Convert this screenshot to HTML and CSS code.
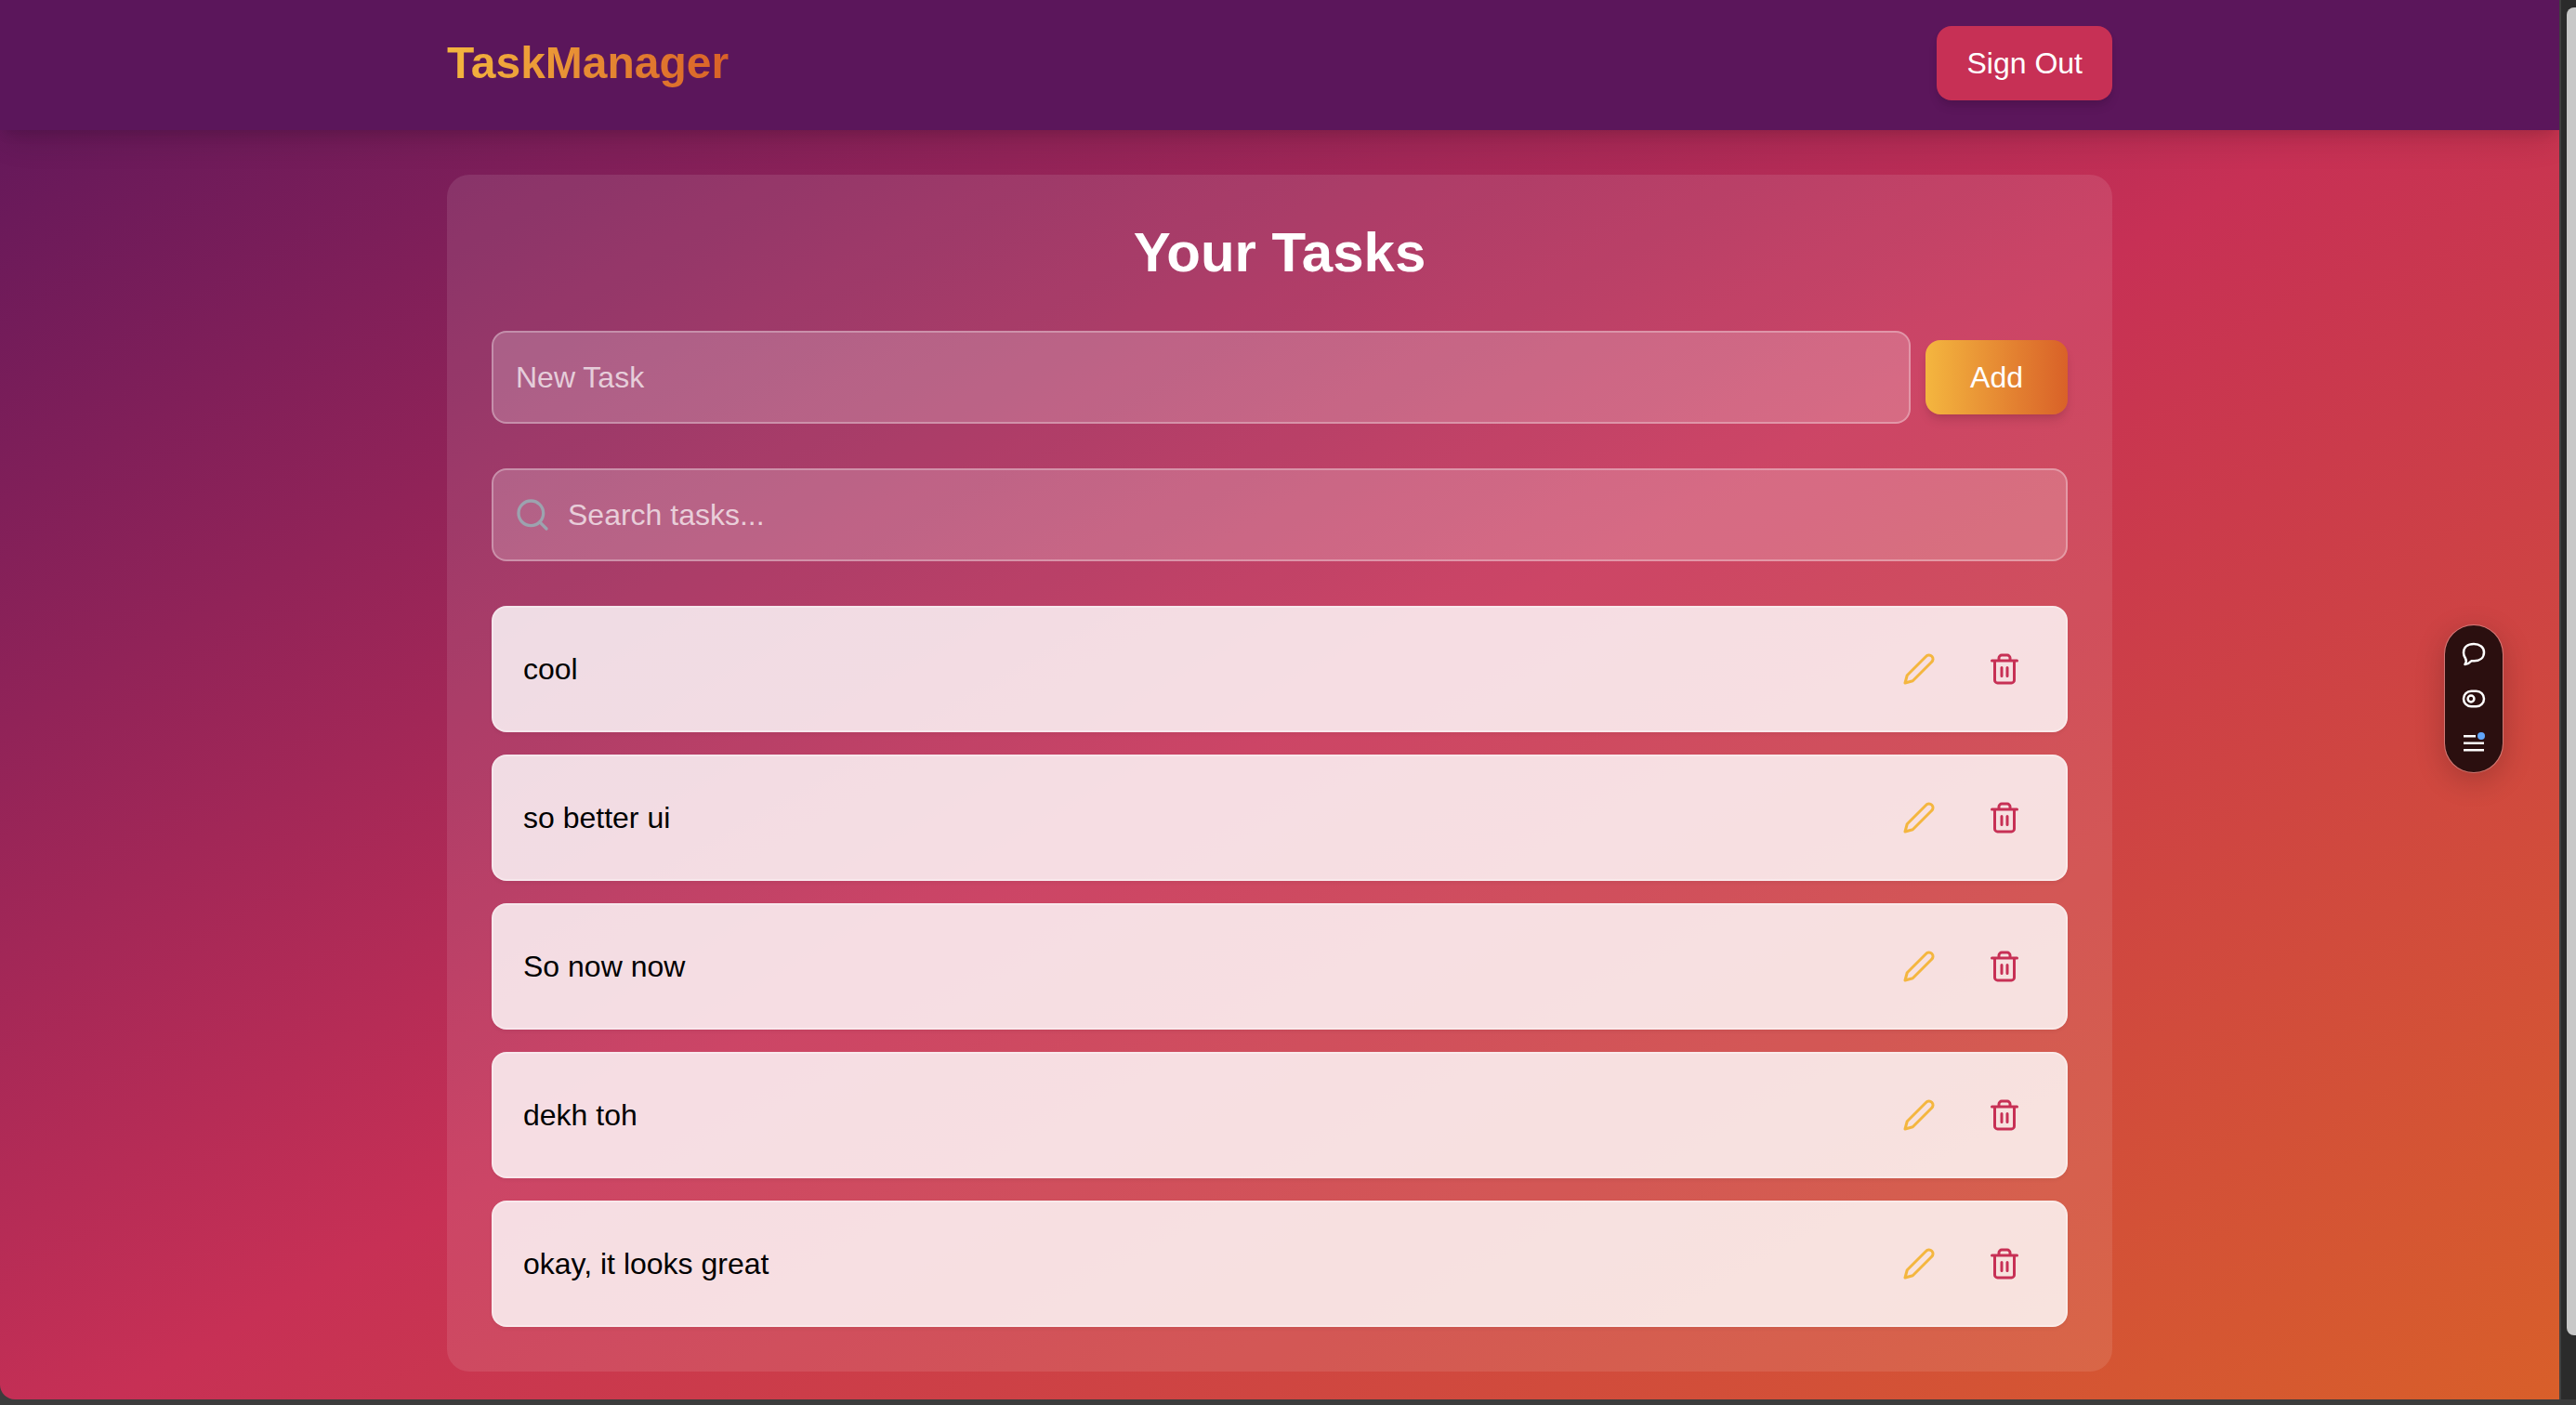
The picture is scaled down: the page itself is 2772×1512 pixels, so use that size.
FILE: index.html
```html
<!DOCTYPE html>
<html lang="en">
<head>
<meta charset="utf-8">
<meta name="viewport" content="width=device-width, initial-scale=1">
<title>TaskManager</title>
<link rel="stylesheet" href="styles.css">
</head>
<body>
<svg class="sprite" aria-hidden="true">
  <symbol id="pencil" viewBox="0 0 24 24"><path d="M17 3a2.85 2.83 0 1 1 4 4L7.500 20.500 2 22l1.500-5.500Z"/></symbol>
  <symbol id="trash" viewBox="0 0 24 24"><path d="M3 6h18M19 6v14c0 1-1 2-2 2H7c-1 0-2-1-2-2V6M8 6V4c0-1 1-2 2-2h4c1 0 2 1 2 2v2M10 11v6M14 11v6"/></symbol>
</svg>
<div class="window">
  <div class="app">
    <header class="header">
      <div class="container header-row">
        <a class="logo" href="#">TaskManager</a>
        <button class="btn btn-signout" type="button">Sign Out</button>
      </div>
    </header>
    <main class="container">
      <section class="card">
        <h1 class="title">Your Tasks</h1>
        <form class="new-task">
          <input class="field" type="text" placeholder="New Task" aria-label="New Task">
          <button class="btn btn-add" type="button">Add</button>
        </form>
        <div class="search">
          <svg class="search-icon" viewBox="0 0 24 24" aria-hidden="true"><circle cx="11" cy="11" r="8"/><path d="m21 21-4.300-4.300"/></svg>
          <input class="field field-search" type="text" placeholder="Search tasks..." aria-label="Search tasks">
        </div>
        <ul class="tasks">
          <li class="task"><span class="task-name">cool</span><button class="icon-btn edit" type="button" aria-label="Edit"><svg class="icon"><use href="#pencil"/></svg></button><button class="icon-btn delete" type="button" aria-label="Delete"><svg class="icon"><use href="#trash"/></svg></button></li>
          <li class="task"><span class="task-name">so better ui</span><button class="icon-btn edit" type="button" aria-label="Edit"><svg class="icon"><use href="#pencil"/></svg></button><button class="icon-btn delete" type="button" aria-label="Delete"><svg class="icon"><use href="#trash"/></svg></button></li>
          <li class="task"><span class="task-name">So now now</span><button class="icon-btn edit" type="button" aria-label="Edit"><svg class="icon"><use href="#pencil"/></svg></button><button class="icon-btn delete" type="button" aria-label="Delete"><svg class="icon"><use href="#trash"/></svg></button></li>
          <li class="task"><span class="task-name">dekh toh</span><button class="icon-btn edit" type="button" aria-label="Edit"><svg class="icon"><use href="#pencil"/></svg></button><button class="icon-btn delete" type="button" aria-label="Delete"><svg class="icon"><use href="#trash"/></svg></button></li>
          <li class="task"><span class="task-name">okay, it looks great</span><button class="icon-btn edit" type="button" aria-label="Edit"><svg class="icon"><use href="#pencil"/></svg></button><button class="icon-btn delete" type="button" aria-label="Delete"><svg class="icon"><use href="#trash"/></svg></button></li>
        </ul>
      </section>
    </main>
    <div class="toolbar" role="toolbar" aria-label="Page tools">
      <button class="tool" type="button" aria-label="Comment"><svg class="tool-icon" viewBox="0 0 32 32"><path d="M6.500 27C8.200 24.500 8.200 22.500 7 20.500C5.700 18.500 5 16.500 5 14.500C5 8.500 9.500 5 16 5C22.500 5 27 8.500 27 14C27 20 22.500 23.300 16.500 23.300C15.500 23.300 14.500 23.300 13.500 23.200C12 25 9.500 26.500 6.500 27Z"/></svg></button>
      <button class="tool" type="button" aria-label="Draft mode"><svg class="tool-icon" viewBox="0 0 32 32"><rect x="5" y="7.700" width="22" height="16.600" rx="8.300"/><circle cx="13" cy="16" r="3.400"/></svg></button>
      <button class="tool" type="button" aria-label="Menu"><svg class="tool-icon" viewBox="0 0 32 32"><path d="M5 8.300h13M5 15.800h22M5 23.300h22"/><circle class="dot" cx="24" cy="8" r="4"/></svg></button>
    </div>
  </div>
  <div class="scroll-track"><div class="scroll-thumb"></div></div>
</div>
</body>
</html>
```
FILE: styles.css
```css
* { box-sizing: border-box; }
body {
  margin: 0;
  background: #3c3c3c;
  font-family: "Liberation Sans", Arial, sans-serif;
  font-size: 32px;
  line-height: 48px;
  color: #000;
}
button, input { font: inherit; margin: 0; }
.sprite { display: none; }
.window {
  display: flex;
  min-height: 100vh;
  padding-bottom: 6px;
}
.app {
  flex: 1;
  border-bottom-left-radius: 16px;
  background: linear-gradient(to bottom right, #5b165b, #c73055, #d96128) 0 0 / 100% calc(100% + 68px) no-repeat;
}
.container {
  width: 100%;
  max-width: 1792px;
  margin: 0 auto;
}
.header {
  padding: 28px 0 32px;
  background: #5b165b;
  box-shadow: 0 20px 30px -6px rgba(0, 0, 0, .1), 0 8px 12px -4px rgba(0, 0, 0, .1);
}
.header-row {
  display: flex;
  align-items: center;
  justify-content: space-between;
}
.logo {
  font-size: 48px;
  line-height: 64px;
  font-weight: 700;
  text-decoration: none;
  color: transparent;
  background: linear-gradient(to right, #f4b63f, #d96128);
  -webkit-background-clip: text;
  background-clip: text;
}
.btn {
  padding: 16px 32px;
  border: 0;
  border-radius: 16px;
  color: #fff;
  box-shadow: 0 8px 12px -2px rgba(0, 0, 0, .1), 0 4px 8px -4px rgba(0, 0, 0, .1);
}
.btn-signout { background: #c73055; }
.btn-add {
  padding: 16px 48px;
  background: linear-gradient(to right, #f4b63f, #d96128);
}
.card {
  margin-top: 48px;
  padding: 48px;
  border-radius: 24px;
  background: rgba(255, 255, 255, .1);
}
.title {
  margin: 0 0 48px;
  font-size: 60px;
  line-height: 72px;
  text-align: center;
  color: #fff;
}
.new-task {
  display: flex;
  align-items: center;
  gap: 16px;
  margin-bottom: 48px;
}
.field {
  flex: 1;
  width: 100%;
  min-width: 0;
  height: 100px;
  padding: 24px;
  border: 2px solid rgba(255, 255, 255, .3);
  border-radius: 16px;
  background: rgba(255, 255, 255, .2);
  color: #fff;
}
.field::placeholder { color: rgba(255, 255, 255, .7); opacity: 1; }
.search {
  position: relative;
  display: flex;
  align-items: center;
  margin-bottom: 48px;
}
.search-icon {
  position: absolute;
  left: 24px;
  width: 40px;
  height: 40px;
  fill: none;
  stroke: #9ca3af;
  stroke-width: 2;
  stroke-linecap: round;
}
.field-search { padding-left: 80px; }
.tasks {
  display: grid;
  gap: 24px;
  margin: 0;
  padding: 0;
  list-style: none;
}
.task {
  display: flex;
  align-items: center;
  gap: 24px;
  padding: 32px;
  border: 2px solid rgba(255, 255, 255, .3);
  border-radius: 16px;
  background: rgba(255, 255, 255, .82);
  box-shadow: 0 2px 4px rgba(0, 0, 0, .05);
}
.task-name { flex: 1; }
.icon-btn {
  display: flex;
  padding: 16px;
  border: 0;
  background: none;
}
.edit { color: #f4b63f; }
.delete { color: #c73055; }
.icon {
  width: 36px;
  height: 36px;
  fill: none;
  stroke: currentColor;
  stroke-width: 2;
  stroke-linecap: round;
  stroke-linejoin: round;
}
.toolbar {
  position: fixed;
  top: 50%;
  right: 78px;
  transform: translateY(-50%);
  margin-top: -4px;
  display: flex;
  flex-direction: column;
  align-items: center;
  gap: 16px;
  width: 64px;
  padding: 15px 0;
  border: 1px solid rgba(255, 255, 255, .3);
  border-radius: 32px;
  background: #2b0f0f;
  background-clip: padding-box;
  box-shadow: 0 8px 32px rgba(0, 0, 0, .2);
}
.tool {
  display: flex;
  padding: 0;
  border: 0;
  background: none;
}
.tool-icon {
  width: 32px;
  height: 32px;
  fill: none;
  stroke: #fff;
  stroke-width: 2.5;
  stroke-linejoin: round;
}
.tool-icon .dot { fill: #60a5fa; stroke: none; }
.scroll-track {
  display: flex;
  width: 18px;
  padding: 8px 0 69px 6px;
  border-left: 2px solid #404040;
  background: #2b2b2b;
}
.scroll-thumb {
  flex: 1;
  border-radius: 8px 0 0 8px;
  background: #c8c8c8;
}
```
